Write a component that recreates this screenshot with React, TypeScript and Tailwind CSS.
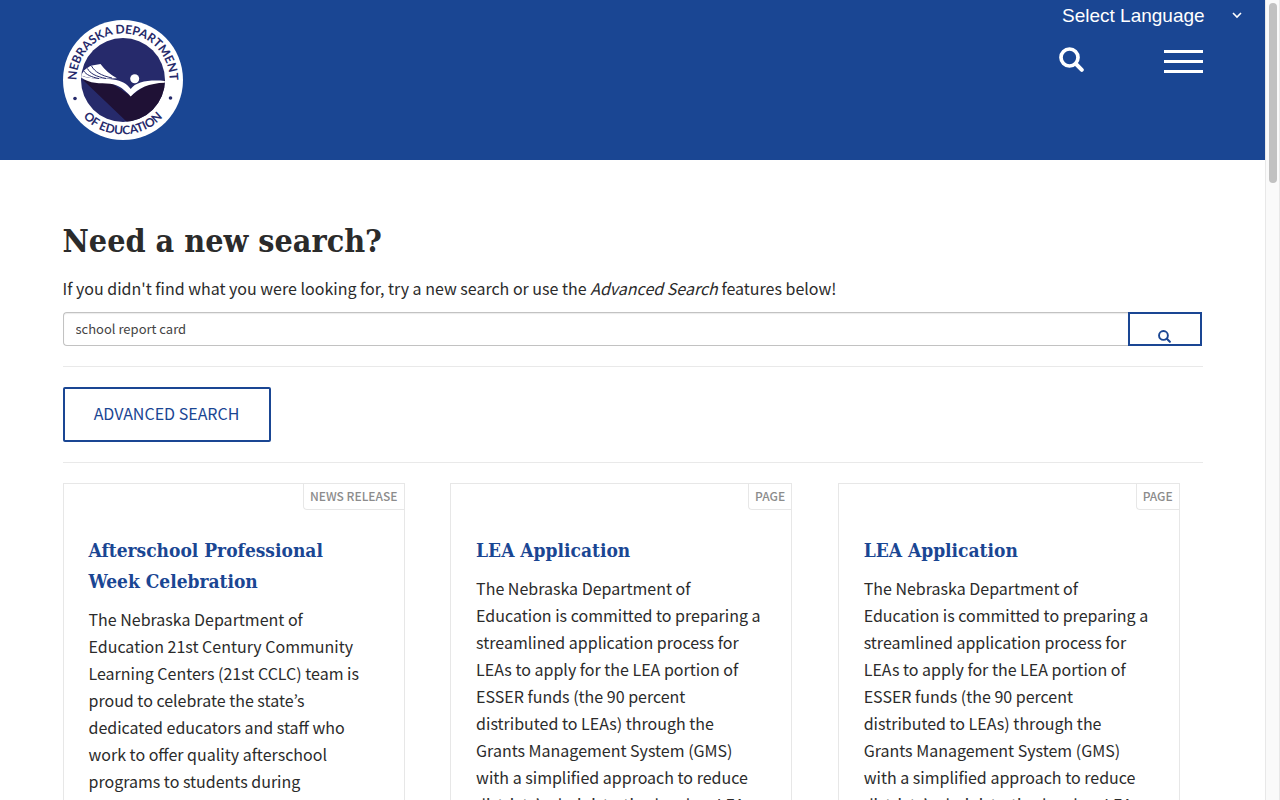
import React, { useState } from 'react';

interface Result {
  id: number;
  type: string;
  title: string;
  excerpt: string;
}

const leaExcerpt =
  'The Nebraska Department of Education is committed to preparing a streamlined application process for LEAs to apply for the LEA portion of ESSER funds (the 90 percent distributed to LEAs) through the Grants Management System (GMS) with a simplified approach to reduce districts’ administrative burden. LEAs';

const results: Result[] = [
  {
    id: 1,
    type: 'News Release',
    title: 'Afterschool Professional Week Celebration',
    excerpt:
      'The Nebraska Department of Education 21st Century Community Learning Centers (21st CCLC) team is proud to celebrate the state’s dedicated educators and staff who work to offer quality afterschool programs to students during',
  },
  { id: 2, type: 'Page', title: 'LEA Application', excerpt: leaExcerpt },
  { id: 3, type: 'Page', title: 'LEA Application', excerpt: leaExcerpt },
];

const SearchIcon: React.FC<{ className: string }> = ({ className }) => (
  <svg viewBox="0 0 25 25" className={className} fill="none" stroke="currentColor" aria-hidden="true">
    <circle cx="10.5" cy="10.5" r="8.5" strokeWidth="3.7" />
    <path d="M17 17l5.8 5.8" strokeWidth="4" strokeLinecap="round" />
  </svg>
);

const Logo: React.FC = () => (
  <svg viewBox="0 0 120 120" className="w-[120px] h-[120px]" role="img" aria-label="Nebraska Department of Education">
    <defs>
      <path id="seal-top" d="M60 106.5 A46.5 46.5 0 0 1 60 13.5 A46.5 46.5 0 0 1 60 106.5" />
      <path id="seal-bottom" d="M5.5 60 A54.5 54.5 0 0 0 114.5 60" />
      <clipPath id="seal-disc">
        <circle cx="60" cy="60" r="42" />
      </clipPath>
    </defs>
    <circle cx="60" cy="60" r="60" fill="#fff" />
    <circle cx="60" cy="60" r="42" fill="#262a6b" />
    <g clipPath="url(#seal-disc)">
      <path d="M20 60 L64 102 L104 103 L104 60 L86 63 L67.7 76 L48 63 Z" fill="#1f1135" />
      {/* open book */}
      <path d="M18 55.5 C28 60 40 58 50 59.5 C59 60.5 64 64 67.7 69 C73 61.5 86 59.5 103 61 L103 62.8 C86 63 76 68 67.7 76.5 C62 70 56 65 47 63.8 C37 63 27 64 18 57.5 Z" fill="#fff" />
      <path d="M18 55.5 L21 50.5 C24 48 26 46.5 29 45.5 L37.5 44 C42 50 47 54.5 54 58.3 C42 58.5 29 60 18 55.5 Z" fill="#fff" />
      <path d="M28.5 46 C32 52 38 55.5 49 58 M24.5 48.5 C27 53.5 33 56.5 43 58.5 M20.8 51 C23 54.5 28 57 36 58.6" fill="none" stroke="#262a6b" strokeWidth="1" />
      <circle cx="71.7" cy="58.8" r="4.5" fill="#fff" />
    </g>
    <g fill="#262a6b" className="font-['Lato'] font-bold text-[12px]" textAnchor="middle">
      <text><textPath href="#seal-top" startOffset="50%">NEBRASKA DEPARTMENT</textPath></text>
      <text><textPath href="#seal-bottom" startOffset="50%">OF EDUCATION</textPath></text>
    </g>
    <circle cx="12" cy="78.5" r="1.8" fill="#262a6b" />
    <circle cx="107.5" cy="78" r="1.8" fill="#262a6b" />
  </svg>
);

const Header: React.FC = () => (
  <header className="bg-[#1a4693] text-white pb-5">
    <div className="flex justify-end h-8 pr-5">
      <div className="relative">
        <select
          aria-label="Select Language"
          className="appearance-none bg-transparent w-[183px] h-8 font-['Liberation_Sans',sans-serif] text-[19px] leading-8"
        >
          <option>Select Language</option>
        </select>
        <svg viewBox="0 0 10 7" className="absolute right-[3px] top-3 w-2.5 h-[7px] pointer-events-none" fill="none" stroke="currentColor" strokeWidth="1.6">
          <path d="M1 1l4 4 4-4" />
        </svg>
      </div>
    </div>
    <div className="max-w-[1140px] mx-auto flex justify-between items-start -mt-3">
      <a href="#"><Logo /></a>
      <div className="flex items-start gap-20 pt-[27px]">
        <button aria-label="Search">
          <SearchIcon className="w-[25px] h-[25px]" />
        </button>
        <button aria-label="Menu" className="flex flex-col gap-[7px] pt-[3px]">
          <span className="w-[39px] h-[3px] bg-white"></span>
          <span className="w-[39px] h-[3px] bg-white"></span>
          <span className="w-[39px] h-[3px] bg-white"></span>
        </button>
      </div>
    </div>
  </header>
);

const ResultCard: React.FC<{ result: Result }> = ({ result }) => (
  <article className="w-[30%] mr-[4%] last:mr-0 flex flex-col border border-[#e7e7e7]">
    <span className="self-end h-[26px] px-1.5 border-l border-b border-[#e7e7e7] rounded-bl text-[12px] leading-6 font-medium uppercase text-[#8c8c8c]">
      {result.type}
    </span>
    <div className="pl-[25px] pr-7 pt-[25px] pb-6">
      <h2 className="mb-[9px] font-['DejaVu_Serif_Condensed','DejaVu_Serif',serif] font-bold text-[19px] leading-[31px] text-[#1a4693]">
        <a href="#">{result.title}</a>
      </h2>
      <p className="text-[16px] leading-[27px]">{result.excerpt}</p>
    </div>
  </article>
);

const App: React.FC = () => {
  const [query, setQuery] = useState('school report card');

  return (
    <div className="flex h-screen bg-white text-[#2b2b2b] font-['Noto_Sans_CJK_KR',sans-serif]">
      <div className="flex-1 overflow-y-auto [scrollbar-width:none]">
        <Header />

        <main className="max-w-[1140px] mx-auto pt-[61px]">
          <h1 className="mb-3.5 font-['DejaVu_Serif_Condensed','DejaVu_Serif',serif] font-bold text-[32px] leading-10">
            Need a new search?
          </h1>
          <p className="mb-2.5 text-[16px] leading-[27px]">
            If you didn't find what you were looking for, try a new search or use the <em>Advanced Search</em> features below!
          </p>

          <form className="flex h-[34px] mr-px" onSubmit={(e) => e.preventDefault()}>
            <input
              type="text"
              aria-label="Search"
              value={query}
              onChange={(e) => setQuery(e.target.value)}
              className="flex-1 px-3 border border-r-0 border-[#c2c2c2] rounded-l text-[13px] text-[#444] shadow-[inset_0_1px_1px_rgba(0,0,0,0.08)]"
            />
            <button aria-label="Search" className="w-[74px] pt-3.5 flex justify-center items-center border-2 border-[#1a4693] text-[#1a4693]">
              <SearchIcon className="w-[13px] h-[13px]" />
            </button>
          </form>

          <hr className="my-5 border-[#e9e9e9]" />
          <button className="w-52 h-[55px] pb-1 border-2 border-[#1a4693] rounded-xs text-[16px] uppercase text-[#1a4693]">
            Advanced Search
          </button>
          <hr className="my-5 border-[#e9e9e9]" />

          <div className="flex items-stretch">
            {results.map((result) => (
              <ResultCard key={result.id} result={result} />
            ))}
          </div>
        </main>
      </div>

      {/* Scroll track */}
      <div className="w-[15px] shrink-0 pt-[3px] flex justify-center items-start bg-[#fafafa] border-x border-[#e8e8e8]">
        <div className="w-2 h-[180px] rounded-full bg-[#c1c1c1]"></div>
      </div>
    </div>
  );
};

export default App;
